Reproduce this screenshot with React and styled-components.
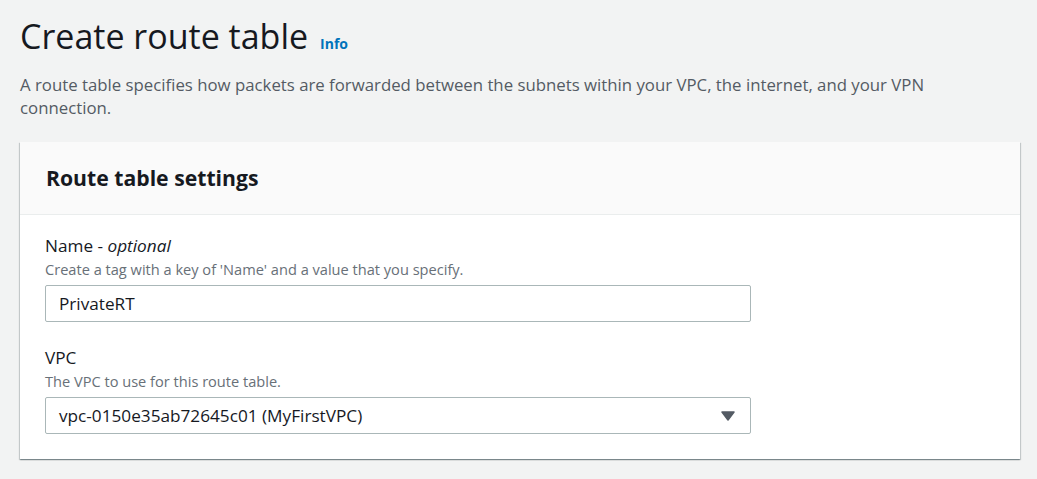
import React from 'react';
import styled, { createGlobalStyle } from 'styled-components';

const GlobalStyle = createGlobalStyle`
    body {
        margin: 0;
        background: #f2f3f3;
        font-family: "Open Sans", "Noto Sans", sans-serif;
        color: #16191f;
    }
`;

const Page = styled.div`
    padding: 14px 17px 20px 20px;
`;

const TitleRow = styled.div`
    display: flex;
    align-items: baseline;
    gap: 12px;
`;

const Title = styled.h1`
    margin: 0;
    font-size: 34px;
    font-weight: 400;
    line-height: 44px;
    color: #16191f;
`;

const InfoLink = styled.a`
    font-size: 14px;
    font-weight: 700;
    color: #0073bb;
    text-decoration: none;
`;

const Description = styled.p`
    margin: 15px 0 23px;
    font-size: 16.8px;
    line-height: 23px;
    color: #545b64;
    max-width: 940px;
`;

const Card = styled.div`
    background: #fff;
    box-shadow: 0 1px 1px 0 rgba(0, 28, 36, 0.3), 1px 1px 1px 0 rgba(0, 28, 36, 0.15), -1px 1px 1px 0 rgba(0, 28, 36, 0.15);
`;

const CardHeader = styled.div`
    background: #fafafa;
    border-bottom: 1px solid #eaeded;
    padding: 22px 26px;
    height: 73px;
    box-sizing: border-box;
`;

const CardTitle = styled.h2`
    margin: 0;
    font-size: 21.2px;
    font-weight: 700;
    line-height: 28px;
`;

const CardBody = styled.div`
    padding: 20px 25px 25px;
    display: flex;
    flex-direction: column;
    gap: 25px;
`;

const Field = styled.div`
    display: flex;
    flex-direction: column;
`;

const Label = styled.label`
    font-size: 17.2px;
    line-height: 22px;
    color: #16191f;

    em {
        font-style: italic;
    }
`;

const Hint = styled.span`
    font-size: 14.6px;
    line-height: 22px;
    color: #687078;
    margin: 1px 0 5px;
`;

const Input = styled.div`
    width: 706px;
    height: 37px;
    box-sizing: border-box;
    border: 1px solid #aab7b8;
    border-radius: 2px;
    background: #fff;
    padding: 0 13px;
    display: flex;
    align-items: center;
    justify-content: space-between;
    font-size: 17.2px;
    color: #16191f;
`;

const Caret = styled.svg`
    width: 14px;
    height: 10px;
    margin-right: 2px;
`;

const App = () => (
    <>
        <GlobalStyle />
        <Page>
            <TitleRow>
                <Title>Create route table</Title>
                <InfoLink href="#">Info</InfoLink>
            </TitleRow>
            <Description>
                A route table specifies how packets are forwarded between the subnets within your VPC, the internet, and your VPN connection.
            </Description>
            <Card>
                <CardHeader>
                    <CardTitle>Route table settings</CardTitle>
                </CardHeader>
                <CardBody>
                    <Field>
                        <Label>Name - <em>optional</em></Label>
                        <Hint>Create a tag with a key of 'Name' and a value that you specify.</Hint>
                        <Input>PrivateRT</Input>
                    </Field>
                    <Field>
                        <Label>VPC</Label>
                        <Hint>The VPC to use for this route table.</Hint>
                        <Input>
                            vpc-0150e35ab72645c01 (MyFirstVPC)
                            <Caret viewBox="0 0 14 10">
                                <path d="M1 1 H13 L7 9 Z" fill="#545b64" stroke="#545b64" strokeWidth="1.5" strokeLinejoin="round" />
                            </Caret>
                        </Input>
                    </Field>
                </CardBody>
            </Card>
        </Page>
    </>
);

export default App;
